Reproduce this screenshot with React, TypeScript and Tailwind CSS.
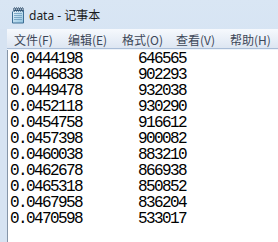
import React from 'react';

const rows: [string, string][] = [
  ['0.0444198', '646565'],
  ['0.0446838', '902293'],
  ['0.0449478', '932038'],
  ['0.0452118', '930290'],
  ['0.0454758', '916612'],
  ['0.0457398', '900082'],
  ['0.0460038', '883210'],
  ['0.0462678', '866938'],
  ['0.0465318', '850852'],
  ['0.0467958', '836204'],
  ['0.0470598', '533017'],
];

const menus = ['文件(F)', '编辑(E)', '格式(O)', '查看(V)', '帮助(H)'];

const NotepadIcon = () => (
  <svg width="14" height="17" viewBox="0 0 14 17">
    <defs>
      <linearGradient id="pad" x1="0" y1="0" x2="1" y2="1">
        <stop offset="0" stopColor="#e8f4fb" />
        <stop offset="1" stopColor="#8fc3e0" />
      </linearGradient>
    </defs>
    <path d="M3 3.5 H12.5 V16 H1.5 V5 Z" fill="url(#pad)" stroke="#3d6f95" strokeWidth="1" />
    <path d="M3 6.5 H11 M3 8.5 H11 M3 10.5 H11 M3 12.5 H11" stroke="#6b9bbd" strokeWidth="0.8" />
    {[3.5, 5.5, 7.5, 9.5, 11.5].map((x) => (
      <ellipse key={x} cx={x} cy="2.5" rx="0.8" ry="1.8" fill="none" stroke="#2f4d6a" strokeWidth="0.9" />
    ))}
  </svg>
);

export default function App() {
  return (
    <div className="w-[278px] h-[242px] overflow-hidden flex flex-col bg-gradient-to-b from-[#d9e6f4] to-[#c9dbef]">
      <div className="h-[29px] shrink-0 flex items-center pl-[11px] pt-[2px]">
        <NotepadIcon />
        <span
          className="ml-[4px] text-[12px] leading-none text-[#1b1b1b] pt-[1px]"
          style={{ fontFamily: '"Noto Sans", "Noto Sans CJK SC", sans-serif' }}
        >
          data - 记事本
        </span>
      </div>
      <div className="flex-1 flex min-h-0">
        <div className="w-[7px] shrink-0 bg-[#d6e3f2]" />
        <div className="flex-1 flex flex-col min-h-0">
          <div
            className="h-[20px] shrink-0 flex items-center gap-[14px] pl-[7px] pt-[2px] bg-gradient-to-b from-[#f6f9fd] to-[#dde6f2] border-b border-[#a9bdd7] text-[12px] leading-none text-[#3d4758]"
            style={{ fontFamily: '"Noto Sans CJK SC", "Noto Sans", sans-serif' }}
          >
            {menus.map((m) => (
              <span key={m} className="w-[40px] whitespace-nowrap">
                {m}
              </span>
            ))}
          </div>
          <div className="h-[1px] shrink-0 bg-[#eef3f9]" />
          <div
            className="flex-1 bg-white border-l border-[#8595a8] pl-[2px] pt-[1px] text-black text-[16px] leading-[16px]"
            style={{ fontFamily: '"Liberation Mono", monospace' }}
          >
            {rows.map(([a, b]) => (
              <div key={a} className="grid grid-cols-[128px_auto] h-[16px] tracking-[-1.6px]">
                <span>{a}</span>
                <span>{b}</span>
              </div>
            ))}
          </div>
        </div>
      </div>
    </div>
  );
}
